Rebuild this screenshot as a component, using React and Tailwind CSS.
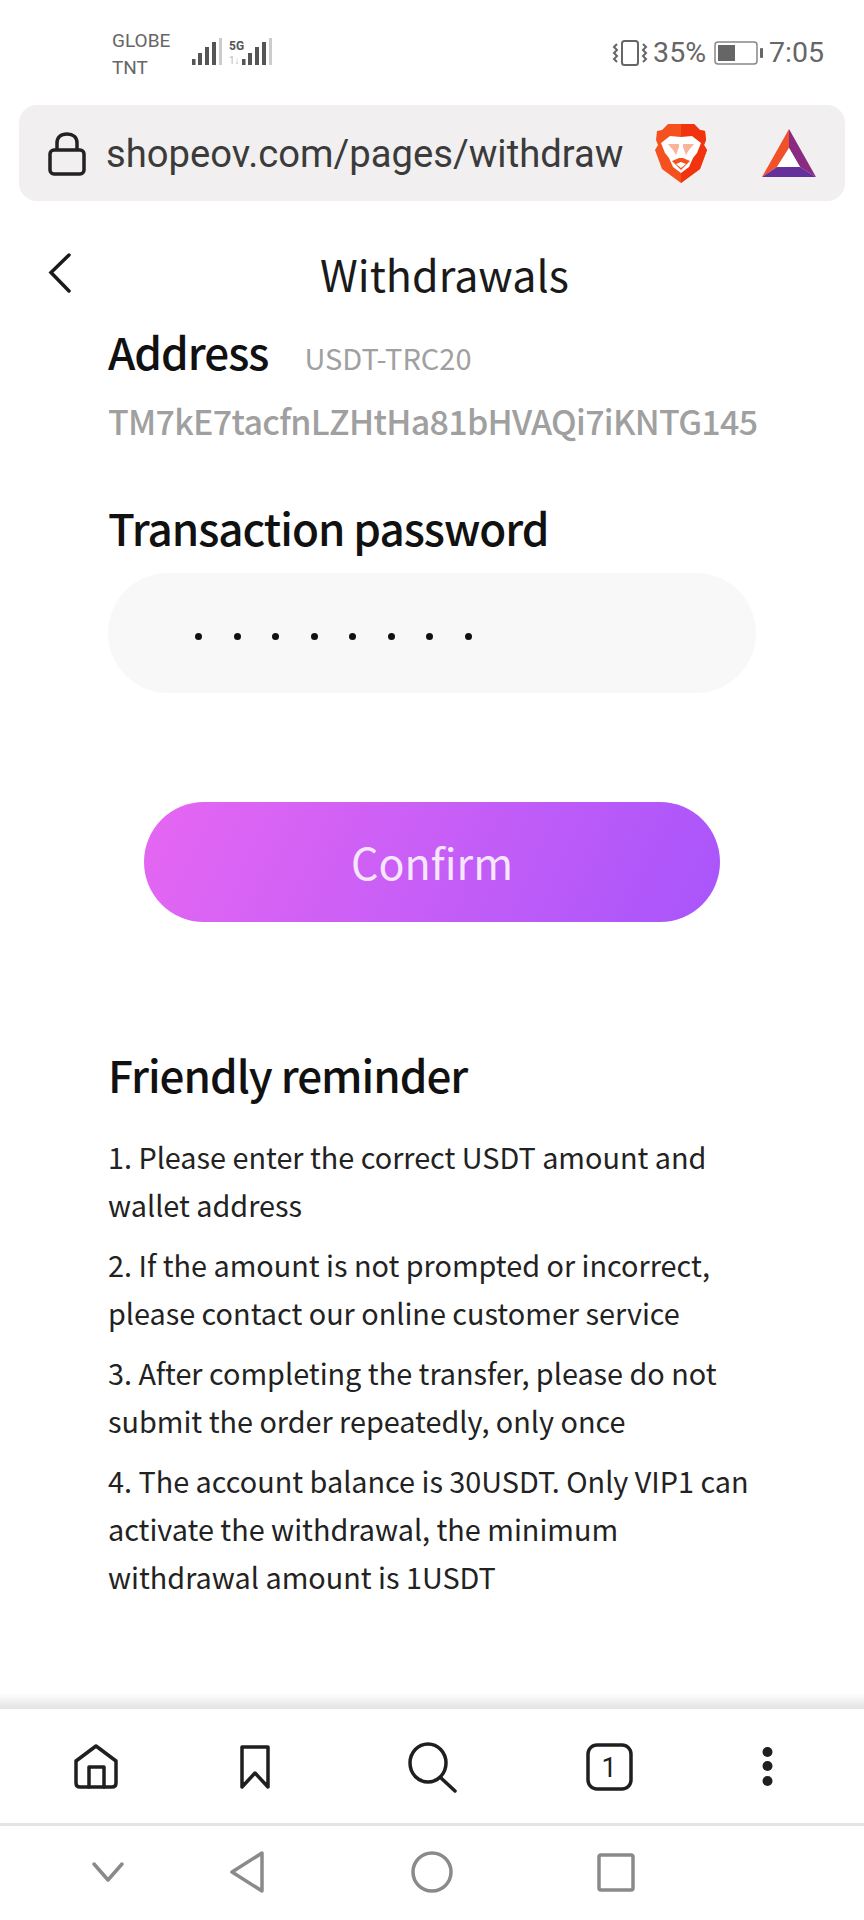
const font = { fontFamily: '"Noto Sans CJK SC", "Noto Sans", sans-serif' };

function Bars({ x = 0 }) {
  return (
    <g transform={`translate(${x} 0)`}>
      <rect x="0" y="21" width="3.500" height="6" fill="#555" />
      <rect x="6" y="15" width="4" height="12" fill="#555" />
      <rect x="13" y="9" width="4" height="18" fill="#555" />
      <rect x="20" y="4" width="4" height="23" fill="#555" />
      <rect x="27" y="0" width="3" height="27" fill="#ccc" />
    </g>
  );
}

function Brave() {
  return (
    <svg width="52" height="60" viewBox="0 0 52 60">
      <path d="M13 1H39L45 7L50 8L51 17L49 22L52 27L45 46L26 60L7 46L0 27L3 22L1 17L2 8L7 7Z" fill="#f4511e" />
      <path d="M26 1H39L45 7L50 8L51 17L49 22L52 27L45 46L26 60Z" fill="#f2330f" />
      <path d="M6 20L15 13L26 14L37 13L46 20L42 30L38 35L34 44L26 50L18 44L14 35L10 30Z" fill="#fff" />
      <path d="M13 21H24V24L21 32L18 27ZM39 21H28V24L31 32L34 27Z" fill="#f9b39a" />
      <path d="M17 38L24 35H28L35 38L26 47Z" fill="#f4511e" />
      <path d="M21 41L26 39L31 41L26 45Z" fill="#fff" />
    </svg>
  );
}

function Bat() {
  return (
    <svg width="54" height="48" viewBox="0 0 54 48">
      <path d="M27 0L0 48L15 38L27 19Z" fill="#f0512a" />
      <path d="M27 0V19L38 38L54 48Z" fill="#8a2a80" />
      <path d="M0 48H54L38 38H15Z" fill="#65309a" />
      <path d="M27 19L15 38H38Z" fill="#fff" />
    </svg>
  );
}

const reminders = [
  ["1. Please enter the correct USDT amount and", "wallet address"],
  ["2. If the amount is not prompted or incorrect,", "please contact our online customer service"],
  ["3. After completing the transfer, please do not", "submit the order repeatedly, only once"],
  ["4. The account balance is 30USDT. Only VIP1 can", "activate the withdrawal, the minimum", "withdrawal amount is 1USDT"],
];

export default function App() {
  return (
    <div className="w-[864px] h-[1920px] bg-white flex flex-col overflow-hidden" style={font}>
      {/* status bar */}
      <div className="h-[105px] flex items-start pl-[112px] pr-[40px] pt-[27px] text-[#666]">
        <div className="text-[19px] leading-[27px] font-['Roboto'] w-[78px]">
          <div>GLOBE</div>
          <div>TNT</div>
        </div>
        <svg width="92" height="32" viewBox="0 0 92 32" className="mt-[11px] ml-[1px]">
          <Bars x="1" />
          <text x="38" y="12" fontSize="12" fontWeight="700" fill="#555" fontFamily="Roboto">5G</text>
          <text x="38" y="26" fontSize="10" fill="#bbb" fontFamily="Roboto">1↓</text>
          <Bars x="51" />
        </svg>
        <div className="ml-auto flex items-center h-[52px] font-['Roboto'] text-[28.500px] text-[#666]">
          <svg width="36" height="26" viewBox="0 0 36 26" className="mr-[5px]" fill="none" stroke="#666">
            <rect x="10" y="1" width="16" height="24" rx="2.500" strokeWidth="2" />
            <path d="M5 4l-3 3 3 3-3 3 3 3-3 3 3 3M31 4l3 3-3 3 3 3-3 3 3 3-3 3" strokeWidth="2" />
          </svg>
          <span>35%</span>
          <svg width="50" height="24" viewBox="0 0 50 24" className="ml-[8px] mr-[5px]">
            <rect x="1" y="1" width="42" height="22" rx="3" fill="none" stroke="#888" strokeWidth="1.500" />
            <rect x="4" y="4" width="17" height="16" fill="#666" />
            <rect x="46" y="7" width="3" height="10" rx="1" fill="#666" />
          </svg>
          <span>7:05</span>
        </div>
      </div>

      {/* url bar */}
      <div className="mx-[19px] h-[96px] rounded-[18px] bg-[#f1efef] flex items-center pl-[29px] relative">
        <svg width="38" height="44" viewBox="0 0 38 44" fill="none" stroke="#222" strokeWidth="3.500" className="mt-[2px]">
          <rect x="2" y="18" width="34" height="24" rx="4" />
          <path d="M9 18V11C9 5 13 2 19 2S29 5 29 11V18" />
        </svg>
        <span className="ml-[20px] mt-[4px] text-[38.200px] text-[#3b3b3b] font-['Roboto'] whitespace-nowrap">shopeov.com/pages/withdraw</span>
        <div className="absolute left-[636px] top-[18px]"><Brave /></div>
        <div className="absolute left-[743px] top-[24px]"><Bat /></div>
      </div>

      {/* header */}
      <div className="h-[75px] mt-[35px] relative flex items-center justify-center">
        <svg width="24" height="40" viewBox="0 0 24 40" fill="none" stroke="#1a1a1a" strokeWidth="3.500" strokeLinecap="round" className="absolute left-[48px] top-[17px]">
          <path d="M21 2L3 19.500L21 38" />
        </svg>
        <h1 className="text-[43px] text-[#1a1a1a] font-normal ml-[25px]">Withdrawals</h1>
      </div>

      {/* content */}
      <div className="pl-[108px] pr-[108px]">
        <div className="flex items-baseline mt-[7px] h-[66px]">
          <span className="text-[44px] leading-[66px] font-medium text-[#111] tracking-[-1px]">Address</span>
          <span className="ml-[36px] text-[29px] text-[#a0a0a0]">USDT-TRC20</span>
        </div>
        <div className="text-[34px] leading-[50px] font-medium text-[#a0a0a0] tracking-[-0.700px] mt-[12px] whitespace-nowrap">TM7kE7tacfnLZHtHa81bHVAQi7iKNTG145</div>
        <div className="text-[44px] leading-[66px] font-medium text-[#111] tracking-[-1px] mt-[48px]">Transaction password</div>
        <div className="mt-[13px] h-[120px] w-[648px] rounded-[60px] bg-[#f8f8f8] flex items-center pl-[87px] pt-[6px] gap-[31.500px]">
          {[0, 1, 2, 3, 4, 5, 6, 7].map((i) => (
            <span key={i} className="w-[7px] h-[7px] rounded-full bg-[#111]" />
          ))}
        </div>
        <div className="mt-[109px] ml-[36px] w-[576px] h-[120px] pb-[2px] rounded-[60px] bg-[linear-gradient(115deg,#e667f2,#a855fb)] flex items-center justify-center text-[43px] text-[#f6e6fb]">Confirm</div>
        <h2 className="mt-[119px] text-[44px] leading-[66px] font-medium text-[#111] tracking-[-1px]">Friendly reminder</h2>
        <div className="mt-[26px] text-[28.800px] leading-[48px] text-[#222]">
          {reminders.map((r, i) => (
            <div key={i} className="mb-[12px] whitespace-nowrap">
              {r.map((l) => <div key={l}>{l}</div>)}
            </div>
          ))}
        </div>
      </div>

      {/* browser toolbar */}
      <div className="mt-auto">
        <div className="h-[16px] bg-gradient-to-b from-white to-[#e2e2e2]" />
        <div className="h-[117px] relative border-b-[3px] border-[#e4e4e4]">
          <svg width="864" height="114" viewBox="0 0 864 114" fill="none" stroke="#1f1f1f" strokeWidth="3.500" strokeLinejoin="round" strokeLinecap="round">
            <path d="M96 37L76 52V74Q76 78 80 78H112Q116 78 116 74V52Z" />
            <path d="M89 78V58H104V78" />
            <path d="M242 38H268V78L255 64L242 78Z" />
            <ellipse cx="428" cy="54" rx="18" ry="19" />
            <path d="M441 69L455 82" />
            <rect x="588" y="36" width="43" height="44" rx="9" />
            <circle cx="767.500" cy="43" r="5" fill="#1f1f1f" stroke="none" />
            <circle cx="767.500" cy="57" r="5" fill="#1f1f1f" stroke="none" />
            <circle cx="767.500" cy="72" r="5" fill="#1f1f1f" stroke="none" />
            <text x="609" y="68" fontSize="27" textAnchor="middle" fill="#1f1f1f" stroke="none" fontFamily="Roboto">1</text>
          </svg>
        </div>
        {/* nav bar */}
        <div className="h-[94px]">
          <svg width="864" height="94" viewBox="0 0 864 94" fill="none" stroke="#8a8a8a" strokeWidth="3.500" strokeLinejoin="round" strokeLinecap="round">
            <path d="M94 38L108 54L122 38" />
            <path d="M262 27V65L232 46Z" />
            <ellipse cx="432" cy="46" rx="19" ry="19" />
            <rect x="599" y="29" width="34" height="35" rx="2" />
          </svg>
        </div>
      </div>
    </div>
  );
}
